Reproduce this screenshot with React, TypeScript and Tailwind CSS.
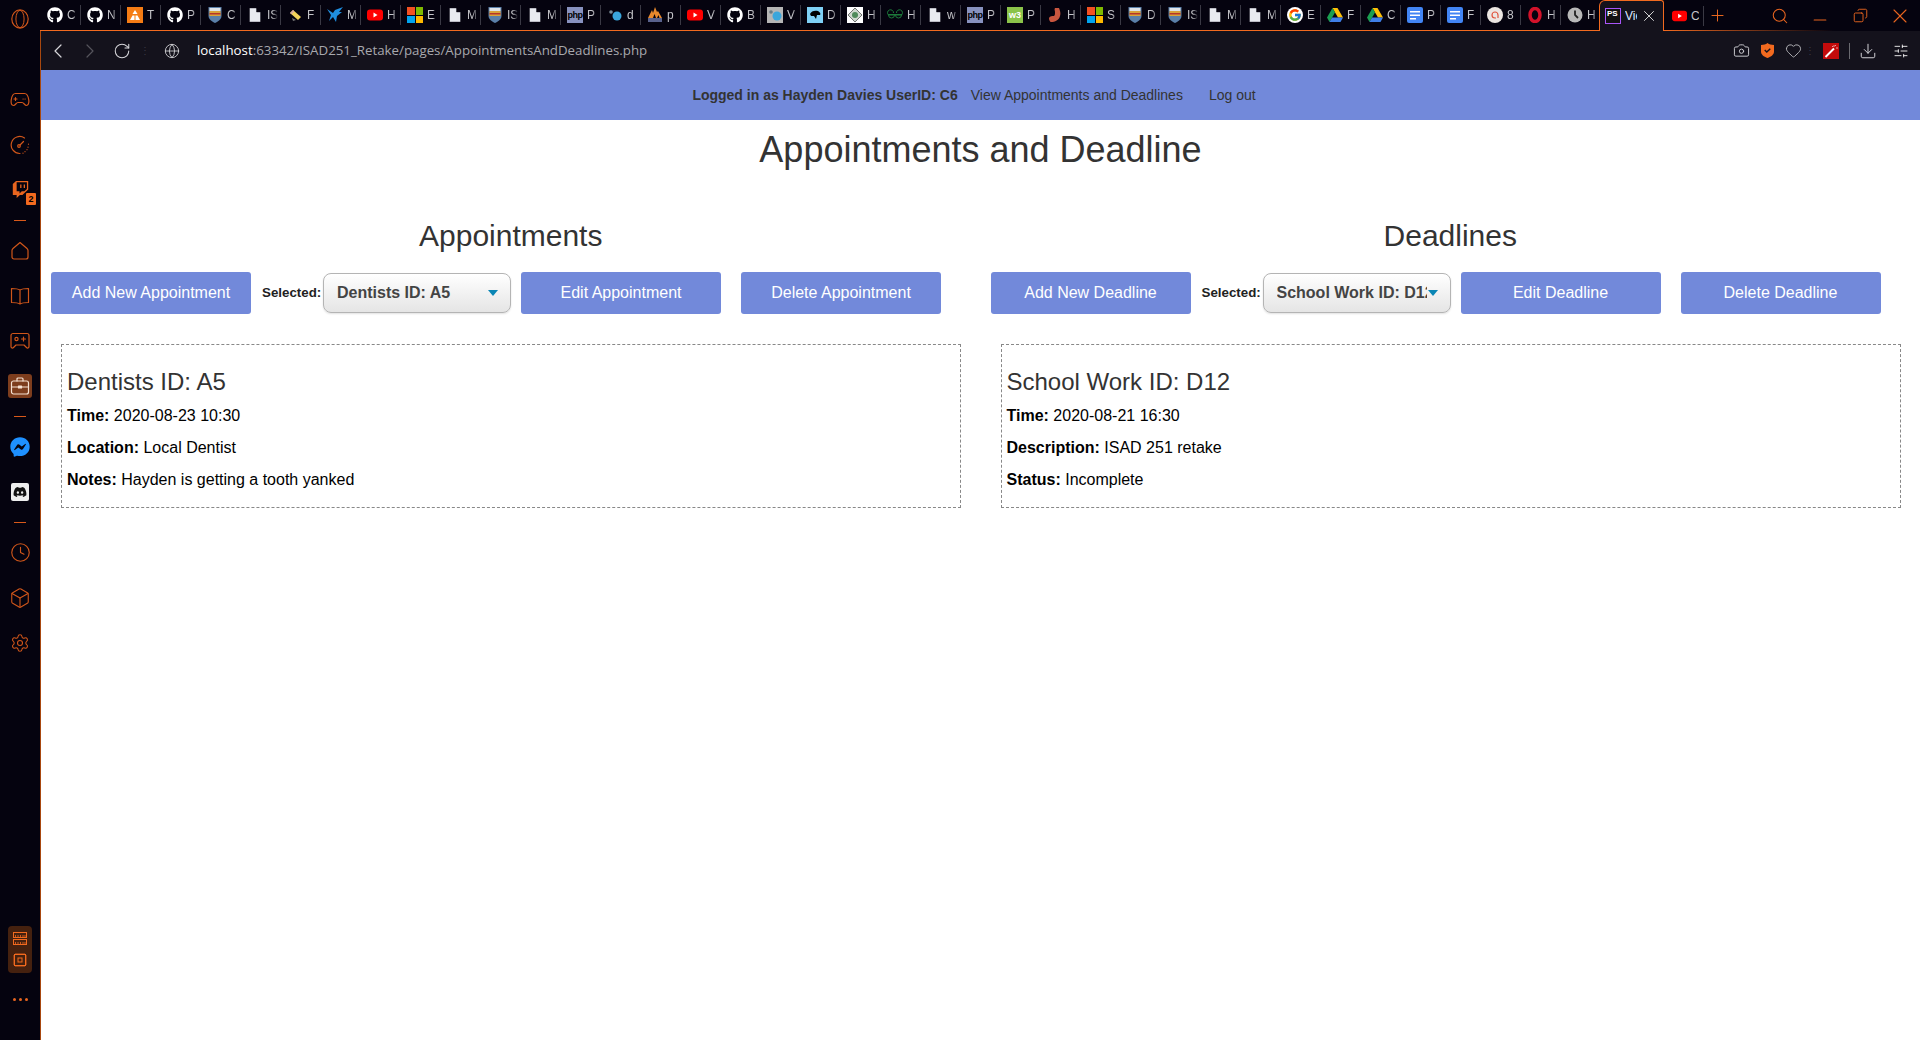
import { ReactNode } from "react";
import {
    Box, Camera, ChevronLeft, ChevronRight, Clock, Copy, Download, Globe, Heart, Minus, Plus, RotateCw, Search,
    Settings, SlidersHorizontal, X,
} from "lucide-react";
import { FaDiscord, FaFacebookMessenger, FaGithub, FaTwitch } from "react-icons/fa";
import { FcGoogle } from "react-icons/fc";

type Fav = "gh" | "tri" | "shield" | "doc" | "pencil" | "mf" | "yt" | "ms" | "php" | "dot" | "flame" | "greyDot"
    | "blueSq" | "diamond" | "gfg" | "w3" | "stomach" | "google" | "drive" | "gdoc" | "a8" | "opera" | "clock";

const tabs: [Fav, string][] = [
    ["gh", "C"], ["gh", "N"], ["tri", "T"], ["gh", "P"], ["shield", "C"], ["doc", "IS"], ["pencil", "F"], ["mf", "M"],
    ["yt", "H"], ["ms", "E"], ["doc", "M"], ["shield", "IS"], ["doc", "M"], ["php", "P"], ["dot", "d"], ["flame", "p"],
    ["yt", "V"], ["gh", "B"], ["greyDot", "V"], ["blueSq", "D"], ["diamond", "H"], ["gfg", "H"], ["doc", "w"], ["php", "P"],
    ["w3", "P"], ["stomach", "H"], ["ms", "S"], ["shield", "D"], ["shield", "IS"], ["doc", "M"], ["doc", "M"], ["google", "E"],
    ["drive", "F"], ["drive", "C"], ["gdoc", "P"], ["gdoc", "F"], ["a8", "8"], ["opera", "H"], ["clock", "H"],
];

const Favicon = ({ type }: { type: Fav }) => {
    switch (type) {
        case "gh":
            return <FaGithub className="w-4 h-4 text-white" />;
        case "google":
            return <span className="w-4 h-4 rounded-full bg-white flex items-center justify-center"><FcGoogle className="w-[14px] h-[14px]" /></span>;
        case "php":
            return <span className="w-4 h-4 bg-[#8892bf] text-black text-[9px] font-bold leading-4 text-center tracking-[-0.5px] font-['Liberation_Sans',sans-serif]">php</span>;
        case "w3":
            return <span className="w-4 h-4 bg-[#8bc34a] text-white text-[9px] font-bold leading-4 text-center font-['Liberation_Sans',sans-serif]">w3</span>;
        case "ms":
            return (
                <span className="w-4 h-4 grid grid-cols-2 gap-px">
                    <span className="bg-[#f25022]" /><span className="bg-[#7fba00]" />
                    <span className="bg-[#00a4ef]" /><span className="bg-[#ffb900]" />
                </span>
            );
    }
    return (
        <svg viewBox="0 0 16 16" className="w-4 h-4">
            {type === "tri" && <>
                <rect width="16" height="16" fill="#f57c14" />
                <path d="M8 3 5.500 7h5zM3 13l2.500-4.500h2v4.500zM13 13l-2.500-4.500h-2v4.500z" fill="#fff" />
            </>}
            {type === "shield" && <>
                <path d="M1.500 0h13v9c0 3.500-3.500 5.500-6.500 7C5 14.500 1.500 12.500 1.500 9z" fill="#5a7fa8" />
                <rect x="2.500" y="1" width="11" height="3" fill="#dfe3e8" />
                <rect x="2.500" y="4" width="11" height="5" fill="#d9a33a" />
                <rect x="2.500" y="6" width="11" height="1.500" fill="#b5342a" />
            </>}
            {type === "doc" && <path d="M2.500 1h7l4 4v10h-11zM9.500 1v4h4" fill="#e8eaf0" stroke="#05030f" strokeWidth="0.4" />}
            {type === "pencil" && <>
                <path d="m3 6 3-3 8 7-3 3z" fill="#f3d35a" />
                <path d="m3 6 3-3 1.500 1.300-3 3z" fill="#d8a9a0" />
                <path d="m5 11 4 2-3 1z" fill="#777" />
            </>}
            {type === "mf" && <path d="M0 2 6 6 8 3 16 0 12 5 15 5 10 9 9 15 6 10 2 14 4 8Z" fill="#1f8fe0" />}
            {type === "yt" && <>
                <rect y="2.500" width="16" height="11" rx="3" fill="#f00" />
                <path d="m6.500 5.500 4 2.500-4 2.500z" fill="#fff" />
            </>}
            {type === "dot" && <>
                <circle cx="10" cy="9" r="4.500" fill="#3aa6dc" />
                <circle cx="4" cy="5" r="1.800" fill="#7a8a94" />
            </>}
            {type === "flame" && <>
                <path d="M1 11 5 3l1 3 2-6 2 5 1-1 4 7z" fill="#e8892c" />
                <path d="M6 11 7.500 7 9 11zM10 11l1.500-3 1 3z" fill="#05030f" />
                <rect x="1" y="11" width="14" height="4" fill="#59628c" />
            </>}
            {type === "greyDot" && <>
                <rect width="16" height="16" fill="#b5b5b5" />
                <circle cx="10" cy="9" r="4.500" fill="#3aa6dc" />
                <circle cx="4" cy="5" r="1.800" fill="#6a7a84" />
            </>}
            {type === "blueSq" && <>
                <rect width="16" height="16" fill="#7fd0f5" />
                <path d="M3 7c1-3 5-4 8-3 2 1 3 3 2 4l-3 0-1 4-2-3-3 0z" fill="#000" />
            </>}
            {type === "diamond" && <>
                <rect width="16" height="16" fill="#fff" />
                <path d="m8 1 7 7-7 7-7-7z" fill="#cfd8d0" stroke="#555" strokeWidth="0.8" />
                <circle cx="8" cy="8" r="3" fill="#4f8a5b" />
            </>}
            {type === "gfg" && <path d="M1 7.500h14M7.500 8H1.500a3 3 0 1 1 5 -2M8.500 8h6a3 3 0 1 0-5 -2M1.500 8a3 3 0 0 0 6 0M8.500 8a3 3 0 0 0 6 0" fill="none" stroke="#1c7a3a" strokeWidth="1" />}
            {type === "stomach" && <path d="M8 1h4c1 3 2 5 1 8-1 4-5 6-9 6-1 0-2-2-2-4 1-2 3-2 5-2 1-1 1-2 1-4 0-1-1-3 0-4z" fill="#c9563f" />}
            {type === "drive" && <>
                <path d="M5.500 1h5L16 10.500h-5z" fill="#ffc107" />
                <path d="M5.500 1 0 10.500 2.500 15 8 5.500z" fill="#1b9e50" />
                <path d="M2.500 15h11l2.500-4.500H5z" fill="#3f7fe8" />
            </>}
            {type === "gdoc" && <>
                <rect y="0" width="16" height="16" rx="2" fill="#4285f4" />
                <path d="M3 4h10v1.500H3zM3 7.500h10V9H3zM3 11h6v1.500H3z" fill="#fff" />
            </>}
            {type === "a8" && <>
                <circle cx="8" cy="8" r="8" fill="#ece6e2" />
                <path d="M11 11V8a3 3 0 1 0-3 3h1" fill="none" stroke="#e0563f" strokeWidth="1.200" />
            </>}
            {type === "opera" && <ellipse cx="8" cy="8" rx="5" ry="6.500" fill="none" stroke="#d3122a" strokeWidth="3.500" />}
            {type === "clock" && <>
                <circle cx="8" cy="8" r="7.500" fill="#b8b8b8" />
                <path d="M8 3.500V8l3 3" fill="none" stroke="#222" strokeWidth="1.800" />
            </>}
        </svg>
    );
};

const Tab = ({ type, label }: { type: Fav; label: string }) => (
    <div className="w-[40px] h-[20px] shrink-0 flex items-center pl-[6px] gap-[4px] border-r border-[#3a3944]">
        <span className="w-4 h-4 shrink-0 flex"><Favicon type={type} /></span>
        <span className="w-[11px] overflow-hidden text-[12px] leading-4 text-[#c4c4c8] whitespace-nowrap [mask-image:linear-gradient(to_right,black_50%,transparent)]">{label}</span>
    </div>
);

const RailItem = ({ children }: { children: ReactNode }) => (
    <div className="relative h-[45px] flex items-center justify-center text-[#d0561a]">{children}</div>
);

const RailLine = () => (
    <div className="h-[16px] flex items-center justify-center">
        <div className="w-3 h-px bg-[#d9591a]" />
    </div>
);

const RailSvg = ({ children }: { children: ReactNode }) => (
    <svg viewBox="0 0 20 20" className="w-5 h-5" fill="none" stroke="currentColor" strokeWidth="1.200" strokeLinejoin="round" strokeLinecap="round">
        {children}
    </svg>
);

const Rail = () => (
    <aside className="w-[40px] shrink-0 h-full bg-[#05030f] flex flex-col">
        <div className="h-[77px] pt-[8px] flex justify-center">
            <svg viewBox="0 0 22 24" className="w-[20px] h-[22px]">
                <ellipse cx="11" cy="12" rx="9" ry="10" fill="none" stroke="#d0561a" strokeWidth="1.300" />
                <ellipse cx="11" cy="12" rx="4.500" ry="9.500" fill="none" stroke="#d0561a" strokeWidth="1.100" />
            </svg>
        </div>
        <RailItem>
            <RailSvg>
                <path d="M5.500 3.500h9c2.500 0 3.700 2.500 4.300 6.500.5 3.500-.8 5.500-2.300 5.500-2 0-2.500-3-4.500-3h-4c-2 0-2.500 3-4.500 3S.7 13.500 1.200 10c.6-4 1.800-6.500 4.300-6.500z" />
                <path d="M5.500 7.500v3M4 9h3M13 9h.2M15 9h.2" />
            </RailSvg>
        </RailItem>
        <RailItem>
            <RailSvg>
                <path d="M14.500 3A8.500 8.500 0 1 0 10 18.500" />
                <path d="M18.500 9v.2M18 12v.2M17 14.500v.2M15 16.500v.2M13 18v.2" />
                <circle cx="9" cy="11" r="1.300" />
                <path d="m10 10 3.500-3.500" />
            </RailSvg>
        </RailItem>
        <RailItem>
            <FaTwitch size={17} className="text-[#e8651f]" />
            <span className="absolute left-[26px] top-[26px] w-[10px] h-[12px] bg-[#f26a1f] text-black text-[9px] font-bold leading-3 text-center rounded-[1px]">2</span>
        </RailItem>
        <RailLine />
        <RailItem>
            <RailSvg><path d="M10 1.500 17 7.500c.7.600 1 1 1 2v6.500a2 2 0 0 1-2 2H4a2 2 0 0 1-2-2V9.500c0-1 .3-1.400 1-2z" /></RailSvg>
        </RailItem>
        <RailItem>
            <RailSvg><path d="M10 4C8 2.800 5 2.500 1.500 2.500v14c3.500 0 6.500.3 8.500 1.500 2-1.200 5-1.500 8.500-1.500v-14C15 2.500 12 2.800 10 4zM10 4v14" /></RailSvg>
        </RailItem>
        <RailItem>
            <RailSvg>
                <path d="M3 2.500h14c1 0 2 1 2 2v11c0 1.500-1.500 2-2.500 1l-2.500-2.500H6l-2.500 2.500c-1 1-2.500.5-2.500-1v-11c0-1 1-2 2-2z" />
                <circle cx="6.500" cy="8" r="1.600" />
                <path d="M13.500 6v4M11.500 8h4" />
            </RailSvg>
        </RailItem>
        <RailItem>
            <div className="w-6 h-6 rounded-[3px] bg-[#7d3d1d] flex items-center justify-center text-[#f5e1d2]">
                <RailSvg>
                    <rect x="1.500" y="5" width="17" height="13" rx="2" />
                    <path d="M7 5V3a1 1 0 0 1 1-1h4a1 1 0 0 1 1 1v2M1.500 11h17" />
                    <rect x="8.500" y="10" width="3" height="2" fill="currentColor" />
                </RailSvg>
            </div>
        </RailItem>
        <RailLine />
        <RailItem><FaFacebookMessenger size={20} className="text-[#1e90ff]" /></RailItem>
        <RailItem>
            <div className="w-[18px] h-[18px] rounded-[2px] bg-[#eeeeee] flex items-center justify-center">
                <FaDiscord size={14} className="text-[#111]" />
            </div>
        </RailItem>
        <RailLine />
        <RailItem><Clock size={21} strokeWidth={1.3} /></RailItem>
        <RailItem><Box size={22} strokeWidth={1.2} /></RailItem>
        <RailItem><Settings size={20} strokeWidth={1.3} /></RailItem>

        <div className="mt-auto mx-[8px] h-[47px] rounded-[4px] bg-[#45210f] flex flex-col items-center justify-center gap-[8px] text-[#f26a1f]">
            <svg viewBox="0 0 14 13" className="w-[14px] h-[13px]" fill="none" stroke="currentColor">
                <rect x="0.500" y="0.500" width="13" height="5" />
                <rect x="0.500" y="7.500" width="13" height="5" />
                <path d="M2.500 3v2.500M5 3v2.500M7.500 3v2.500M10 3v2.500M12 3v2.500M2.500 10v2.500M5 10v2.500M7.500 10v2.500M10 10v2.500M12 10v2.500" strokeWidth="0.800" />
            </svg>
            <svg viewBox="0 0 14 14" className="w-[14px] h-[14px]" fill="none" stroke="currentColor">
                <rect x="1.500" y="1.500" width="11" height="11" />
                <rect x="5" y="5" width="4" height="4" />
                <path d="M3 0v1.500M5 0v1.500M7 0v1.500M9 0v1.500M11 0v1.500M3 12.500V14M5 12.500V14M7 12.500V14M9 12.500V14M11 12.500V14M0 3h1.500M0 5h1.500M0 7h1.500M0 9h1.500M0 11h1.500M12.500 3H14M12.500 5H14M12.500 7H14M12.500 9H14M12.500 11H14" strokeWidth="0.800" />
            </svg>
        </div>
        <div className="mt-[25px] mb-[39px] flex justify-center gap-[3px]">
            <span className="w-[3px] h-[3px] rounded-full bg-[#e8651f]" />
            <span className="w-[3px] h-[3px] rounded-full bg-[#e8651f]" />
            <span className="w-[3px] h-[3px] rounded-full bg-[#e8651f]" />
        </div>
    </aside>
);

const TabStrip = () => (
    <div className="h-[31px] flex bg-[#05030f]">
        <div className="w-[1559px] shrink-0 pl-px flex items-center overflow-hidden border-b border-[#f26a1f]">
            {tabs.map(([type, label], i) => <Tab key={i} type={type} label={label} />)}
        </div>
        <div className="w-[65px] shrink-0 h-[31px] flex items-center pl-[5px] gap-[4px] bg-[#14121c] border-x border-t border-[#f26a1f] rounded-tl-[6px] rounded-tr-[3px]">
            <span className="w-4 h-4 shrink-0 border border-[#a855f7] bg-[#111] text-white text-[8px] font-bold leading-[10px] pl-px font-['Liberation_Sans',sans-serif]">PS</span>
            <span className="w-[12px] overflow-hidden text-[12px] text-[#dfe8ff]">Vie</span>
            <X size={18} className="-ml-[1px] shrink-0 text-[#e8e8e8]" strokeWidth={1.2} />
        </div>
        <div className="relative flex-1 flex items-center">
            <div className="absolute bottom-0 left-0 w-[170px] h-px bg-gradient-to-r from-[#f26a1f] to-transparent" />
            <div className="w-[40px] h-[20px] shrink-0 flex items-center pl-[8px] gap-[4px] border-r border-[#3a3944]">
                <span className="w-[15px] h-4 shrink-0 flex"><Favicon type="yt" /></span>
                <span className="w-[8px] overflow-hidden text-[12px] text-[#c4c4c8]">C</span>
            </div>
            <Plus size={19} className="ml-[4px] text-[#f26a1f]" strokeWidth={1.2} />
            <div className="ml-auto flex items-center text-[#e8651f]">
                <div className="w-[40px] flex justify-center"><Search size={18} strokeWidth={1.4} /></div>
                <div className="w-[40px] flex justify-center"><Minus size={20} strokeWidth={1.3} className="mt-[9px]" /></div>
                <div className="w-[40px] flex justify-center"><Copy size={15} strokeWidth={1.5} className="-scale-x-100" /></div>
                <div className="w-[40px] flex justify-center"><X size={24} strokeWidth={1.1} /></div>
            </div>
        </div>
    </div>
);

const AddressBar = () => (
    <div className="h-[39px] flex items-center bg-[#14121c] text-[#d6d6da] border-l border-[#a8480f]">
        <div className="w-[32px] ml-px flex justify-center"><ChevronLeft size={24} strokeWidth={1.2} /></div>
        <div className="w-[32px] flex justify-center text-[#55545c]"><ChevronRight size={24} strokeWidth={1.2} /></div>
        <div className="w-[32px] flex justify-center"><RotateCw size={18} strokeWidth={1.4} /></div>
        <div className="w-[14px] flex justify-center text-[#3a3944] text-[10px] leading-none">⋮</div>
        <div className="w-[40px] flex justify-center"><Globe size={16} strokeWidth={1.3} /></div>
        <div className="ml-[5px] text-[13.3px] text-[#a8a8ad] font-['Open_Sans',sans-serif] whitespace-nowrap">
            <span className="text-white">localhost</span>:63342/ISAD251_Retake/pages/AppointmentsAndDeadlines.php
        </div>
        <div className="ml-auto pr-[3px] flex items-center">
            <div className="w-[26px] flex justify-center"><Camera size={17} strokeWidth={1.3} /></div>
            <div className="w-[26px] flex justify-center">
                <svg viewBox="0 0 14 16" className="w-[13px] h-[15px]">
                    <path d="M7 0c2 1.500 4 2 7 2v7c0 3.500-3 5.500-7 7-4-1.500-7-3.500-7-7V2c3 0 5-.5 7-2z" fill="#f26a1f" />
                    <path d="m4 7.500 2.200 2.200L10 6" fill="none" stroke="#14121c" strokeWidth="1.500" />
                </svg>
            </div>
            <div className="w-[26px] flex justify-center"><Heart size={17} strokeWidth={1.3} className="text-[#b8b8bc]" /></div>
            <div className="w-[8px] flex justify-center text-[#3a3944] text-[10px] leading-none">⋮</div>
            <div className="w-[34px] flex justify-center">
                <svg viewBox="0 0 16 16" className="w-4 h-4">
                    <rect width="16" height="16" fill="#c30b0b" />
                    <path d="M2.500 14 11 5.500" stroke="#fff" strokeWidth="2" />
                    <path d="M11 2v2M13 5h2M9 3l1 1M13 2l-1 1" stroke="#f5c0c0" strokeWidth="0.8" />
                </svg>
            </div>
            <div className="w-[3px] h-4 flex justify-center"><div className="w-px h-full bg-[#6a6a70]" /></div>
            <div className="w-[34px] flex justify-center"><Download size={18} strokeWidth={1.3} /></div>
            <div className="w-[32px] flex justify-center text-white"><SlidersHorizontal size={16} strokeWidth={1.3} /></div>
        </div>
    </div>
);

const Action = ({ label, className }: { label: string; className?: string }) => (
    <button className={`w-[200px] h-[42px] shrink-0 bg-[#7289da] text-white text-[16px] rounded-[3px] ${className ?? ""}`}>{label}</button>
);

interface ColumnProps {
    heading: string;
    noun: string;
    selected: string;
    lines: [string, string][];
}

const Column = ({ heading, noun, selected, lines }: ColumnProps) => (
    <section>
        <h2 className="mt-[48px] text-[30px] leading-[36px] text-[#333] text-center">{heading}</h2>
        <div className="mt-[18px] pl-[10px] flex items-center">
            <Action label={`Add New ${noun}`} />
            <label className="ml-[11px] w-[61px] text-[13.33px] font-bold text-[#222] whitespace-nowrap">Selected:</label>
            <div className="relative w-[188px] h-[40px] shrink-0">
                <select
                    defaultValue={selected}
                    className="w-full h-full appearance-none pl-[13px] pr-[23px] text-[16px] font-bold text-[#444] border border-[#b4b4b4] rounded-[8px] bg-gradient-to-b from-white to-[#e5e5e5] shadow-[0_1px_2px_rgba(0,0,0,0.12)] font-['Liberation_Sans',sans-serif]"
                >
                    <option>{selected}</option>
                </select>
                <span className="absolute right-[13px] top-[17px] border-x-[5px] border-x-transparent border-t-[6px] border-t-[#0a86b5]" />
            </div>
            <Action label={`Edit ${noun}`} className="ml-[10px]" />
            <Action label={`Delete ${noun}`} className="ml-[20px]" />
        </div>
        <div className="mt-[30px] ml-[20px] w-[900px] h-[164px] border border-dashed border-[#888] pl-[5px] pt-[23px]">
            <h3 className="text-[24px] leading-[28px] text-[#333]">{selected}</h3>
            <div className="mt-[10px] flex flex-col gap-[12px]">
                {lines.map(([k, v]) => (
                    <p key={k} className="text-[16px] leading-[20px] text-black"><b>{k}:</b> {v}</p>
                ))}
            </div>
        </div>
    </section>
);

export default function App() {
    return (
        <div className="w-[1920px] h-[1040px] overflow-hidden flex bg-white font-['Liberation_Sans',Arial,sans-serif]">
            <Rail />
            <div className="flex-1 min-w-0 flex flex-col">
                <TabStrip />
                <AddressBar />
                <main className="flex-1 border-l border-[#a8480f]">
                    <nav className="h-[50px] bg-[#7289da] flex items-center justify-center text-[14px] text-[#333]">
                        <span className="font-bold">Logged in as Hayden Davies UserID: C6</span>
                        <a className="px-[13px]">View Appointments and Deadlines</a>
                        <a className="px-[13px]">Log out</a>
                    </nav>
                    <h1 className="mt-[10px] text-[36px] leading-[40px] text-[#333] text-center">Appointments and Deadline</h1>
                    <div className="grid grid-cols-2">
                        <Column
                            heading="Appointments"
                            noun="Appointment"
                            selected="Dentists ID: A5"
                            lines={[["Time", "2020-08-23 10:30"], ["Location", "Local Dentist"], ["Notes", "Hayden is getting a tooth yanked"]]}
                        />
                        <Column
                            heading="Deadlines"
                            noun="Deadline"
                            selected="School Work ID: D12"
                            lines={[["Time", "2020-08-21 16:30"], ["Description", "ISAD 251 retake"], ["Status", "Incomplete"]]}
                        />
                    </div>
                </main>
            </div>
        </div>
    );
}
